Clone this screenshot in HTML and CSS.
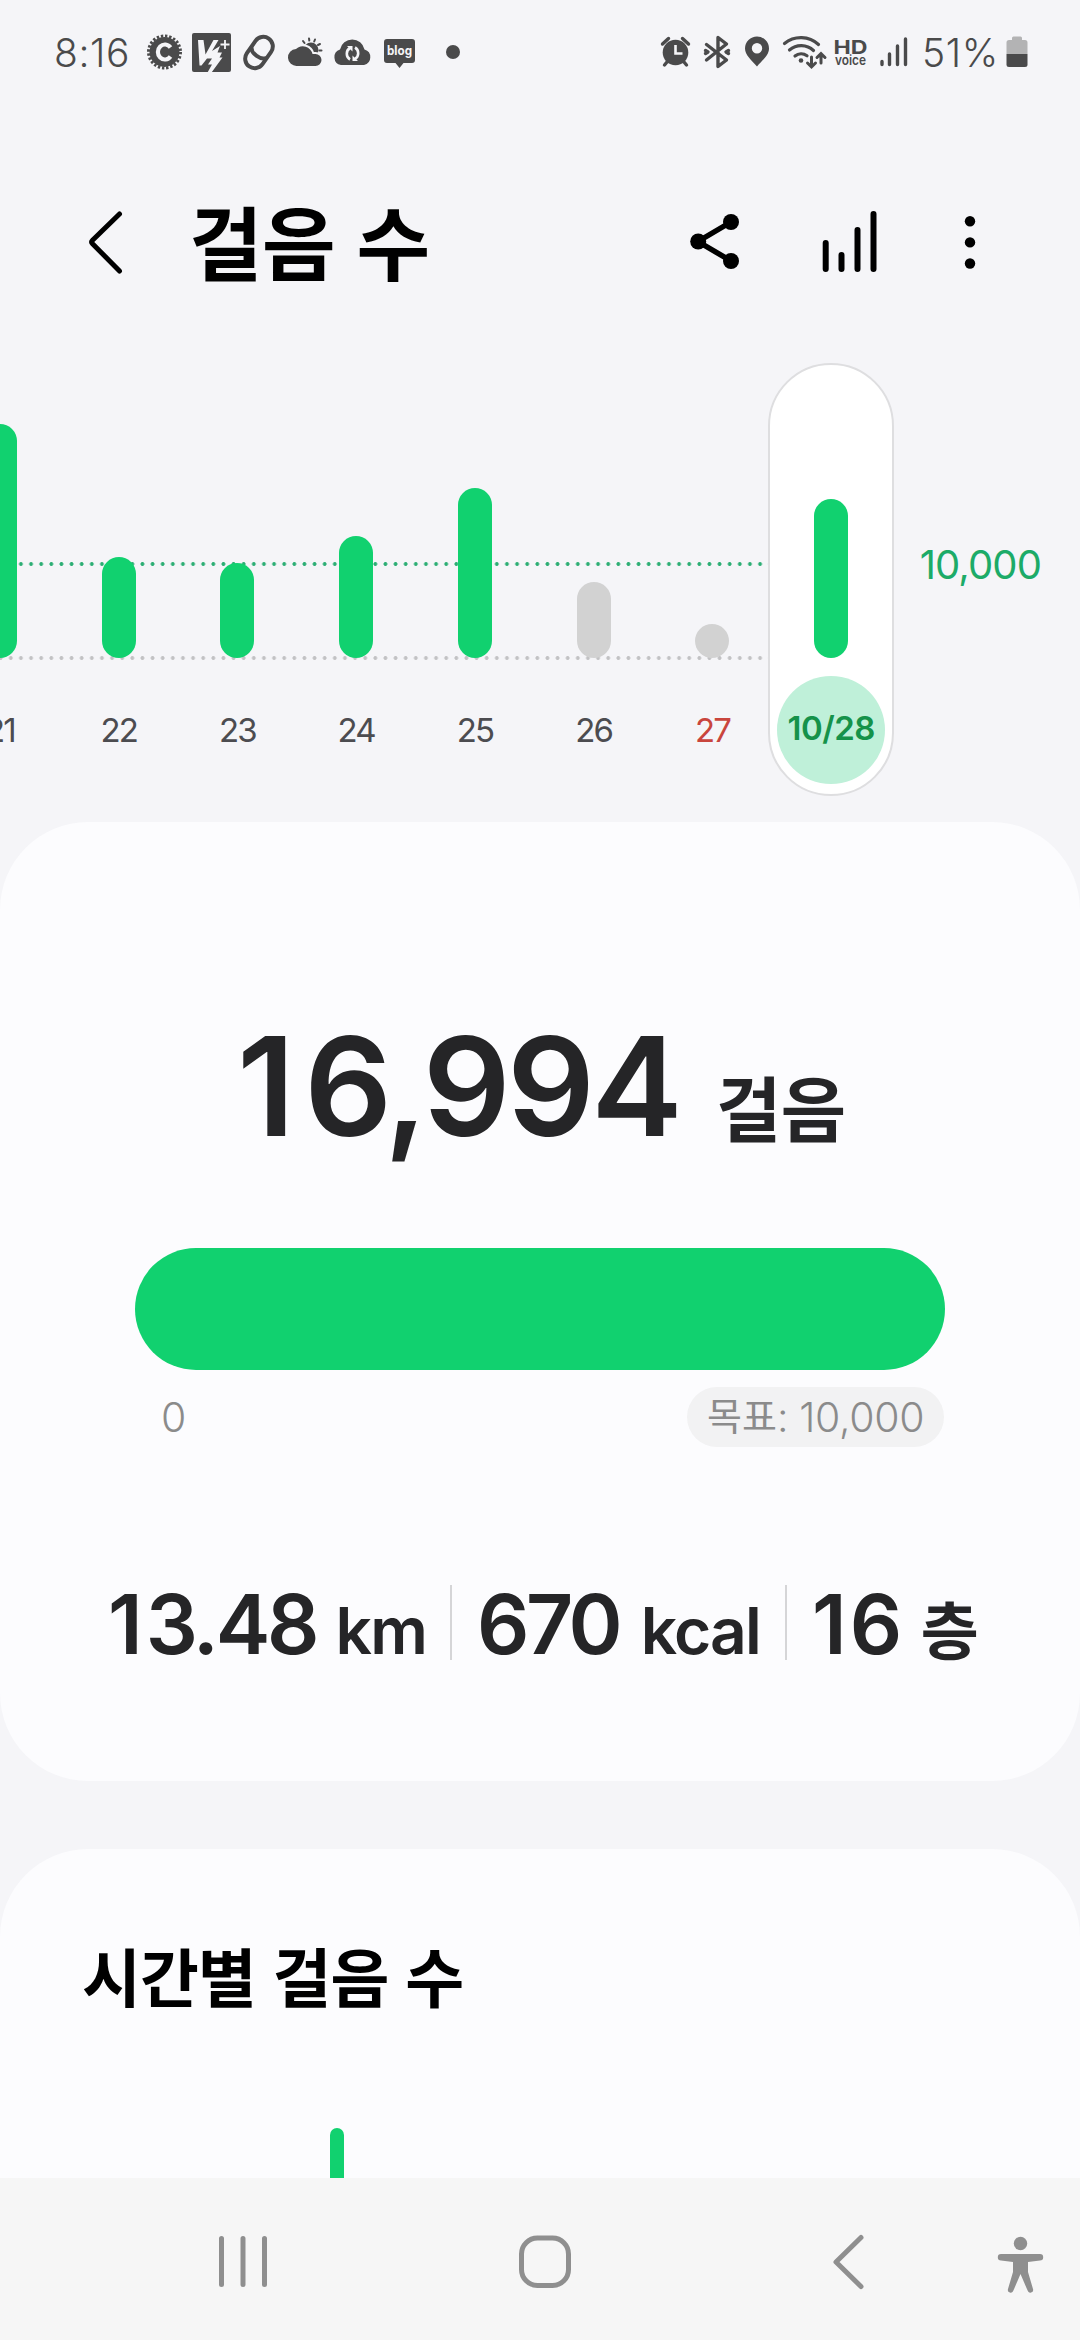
FILE: index.html
```html
<!DOCTYPE html>
<html lang="ko">
<head>
<meta charset="utf-8">
<title>걸음 수</title>
<link rel="stylesheet" href="styles.css">
</head>
<body>
<div class="screen">
  <div class="status">
    <span class="clock">8:16</span>
    <svg class="status-left" width="330" height="50" viewBox="140 27 330 50">
      <circle cx="164.500" cy="52" r="15" fill="#4a4a4b"/>
      <circle cx="164.500" cy="52" r="16" fill="none" stroke="#4a4a4b" stroke-width="3" stroke-dasharray="2.400 1.790"/>
      <path d="M170.500 47.500a7 7.500 0 1 0 0 9" fill="none" stroke="#f5f5f8" stroke-width="4.200"/>
      <rect x="192" y="33" width="39" height="39" rx="2" fill="#4a4a4b"/>
      <path d="M198 40h5.500l2 14.500 8-14.500h5l-6.500 11 8-5-2.500 6.500h4.500l-2.500 5h3l-11 15h-4l4.500-8h-4l4-6h-5l-5.500 7h-2z" fill="#f5f5f8"/>
      <path d="M225 40v9M220.500 44.500h9" stroke="#f5f5f8" stroke-width="1.800"/>
      <g transform="rotate(35 259 52.500)" fill="none" stroke="#4a4a4b" stroke-width="4">
        <rect x="249.500" y="35.500" width="19" height="34" rx="9.500"/>
        <path d="M250 52.500a9.500 6 0 0 0 18 0"/>
      </g>
      <circle cx="311" cy="50" r="7.500" fill="#4a4a4b"/>
      <g stroke="#4a4a4b" stroke-width="2" stroke-linecap="round"><path d="M303 41l1.500 2M309 38.500l.3 2M315 39.500l-.8 2M320 44l-2 1M321.500 50.500h-2M320.500 57l-1.500-1"/></g>
      <path d="M297 66a8.500 8.500 0 0 1-1-17 10 10 0 0 1 16.500 5h3a6 6 0 0 1 0 12z" fill="#4a4a4b" stroke="#f5f5f8" stroke-width="4" paint-order="stroke"/>
      <path d="M341 65a8 8 0 0 1-1-15.500 12.500 12.500 0 0 1 24.500 0A8 8 0 0 1 364 65z" fill="#4a4a4b"/>
      <path d="M350 48a6 6.500 0 0 0 0 11.500M355 47.500a6 6.500 0 0 1 0 11.500" fill="none" stroke="#f5f5f8" stroke-width="2.600"/>
      <path d="M347 46h5.500v5.500zM358 61h-5.500v-5.500z" fill="#f5f5f8"/>
      <path d="M387 39h25a3 3 0 0 1 3 3v18a3 3 0 0 1-3 3h-8.500l-4 5-4-5H387a3 3 0 0 1-3-3V42a3 3 0 0 1 3-3z" fill="#4a4a4b"/>
      <text x="387" y="55" class="blog" textLength="25" lengthAdjust="spacingAndGlyphs">blog</text>
      <circle cx="453" cy="52" r="7" fill="#4a4a4b"/>
    </svg>
    <svg class="status-right" width="260" height="50" viewBox="655 27 260 50">
      <circle cx="675.500" cy="52.500" r="12.800" fill="#4a4a4b"/>
      <path d="M662.500 44l6-5.500M688.500 44l-6-5.500M667 62l-2.500 3M684 62l2.500 3" stroke="#4a4a4b" stroke-width="3.400" stroke-linecap="round"/>
      <path d="M675.500 45v8.500h7" fill="none" stroke="#f5f5f8" stroke-width="2.600"/>
      <path d="M706.500 44.500l20 15.500-8.500 6.500V37.500l8.500 6.500-20 16M705.500 50.500l2.500 1.500-2.500 1.500M728.500 50.500l-2.500 1.500 2.500 1.500" fill="none" stroke="#4a4a4b" stroke-width="3.400" stroke-linejoin="round" stroke-linecap="round"/>
      <path fill-rule="evenodd" d="M757 66.500c-6-7-12-11.500-12-18a12 12 0 0 1 24 0c0 6.500-6 11-12 18zM757 43a5.200 5.200 0 1 0 0 10.400A5.200 5.200 0 0 0 757 43z" fill="#4a4a4b"/>
      <g fill="none" stroke="#4a4a4b" stroke-width="3.200" stroke-linecap="round">
        <path d="M784.500 43.500a26 26 0 0 1 34 1M789.500 50a18 18 0 0 1 24 .5M795 56a10 10 0 0 1 12-.3"/>
        <path d="M811.500 57v9M807.500 63l4 4 4-4M821 63v-9M817 57.500l4-4 4 4" stroke-width="3"/>
      </g>
      <circle cx="801" cy="60.500" r="2.300" fill="#4a4a4b"/>
      <text x="833.500" y="53.500" class="hd" textLength="34" lengthAdjust="spacingAndGlyphs">HD</text>
      <text x="835" y="64.500" class="voice" textLength="31" lengthAdjust="spacingAndGlyphs">voice</text>
      <path d="M882 61.500v3M889.500 54v10.500M897.500 46v18.500M905.500 39v25.500" stroke="#4a4a4b" stroke-width="3.400" stroke-linecap="round"/>
    </svg>
    <span class="percent">51%</span>
    <svg class="battery" width="22" height="32" viewBox="0 0 22 32">
      <path d="M6 3V2q0-1.500 1.500-1.500h7Q16 .500 16 2v2h3q2.500 0 2.500 2.500V18H.500V6.500Q.500 4 3 4h3z" fill="#b3b3b4"/>
      <path d="M.500 18h21v10.500q0 2.500-2.500 2.500H3Q.500 31 .500 28.500z" fill="#4a4a4b"/>
    </svg>
  </div>

  <header class="header">
    <svg class="back" width="36" height="66" viewBox="87 209 36 66"><path d="M119.500 214L92.500 240.300q-1.700 1.700 0 3.400L119.500 271" fill="none" stroke="#000" stroke-width="5" stroke-linecap="round"/></svg>
    <h1 class="title">걸음 수</h1>
    <svg class="actions" width="300" height="70" viewBox="685 207 300 70">
      <path d="M731 222L698 241.500l33 19.500" fill="none" stroke="#000" stroke-width="5.500"/>
      <circle cx="698.200" cy="241.500" r="8"/><circle cx="731" cy="222" r="8"/><circle cx="731" cy="261" r="8"/>
      <path d="M825.700 243v26M841.500 255v14M857.500 230v39M873.500 214v55" stroke="#000" stroke-width="6" stroke-linecap="round"/>
      <circle cx="970" cy="221.300" r="5.200"/><circle cx="970" cy="242.400" r="5.200"/><circle cx="970" cy="263.500" r="5.200"/>
    </svg>
  </header>

  <section class="chart">
    <div class="days">
      <div class="day"><i class="bar" style="height:234px"></i><span class="date">21</span></div>
      <div class="day"><i class="bar" style="height:101px"></i><span class="date">22</span></div>
      <div class="day"><i class="bar" style="height:95px"></i><span class="date">23</span></div>
      <div class="day"><i class="bar" style="height:122px"></i><span class="date">24</span></div>
      <div class="day"><i class="bar" style="height:170px"></i><span class="date">25</span></div>
      <div class="day"><i class="bar missed" style="height:76px"></i><span class="date">26</span></div>
      <div class="day"><i class="bar missed" style="height:34px"></i><span class="date holiday">27</span></div>
      <div class="day selected"><i class="bar" style="height:159px"></i><span class="date">10/28</span></div>
    </div>
    <span class="goal-line-label">10,000</span>
  </section>

  <section class="card summary">
    <div class="count"><span class="count-value"><span class="lead">1</span>6,994</span><span class="count-unit">걸음</span></div>
    <div class="progress"></div>
    <div class="range"><span class="zero">0</span><span class="goal"><span class="goal-name">목표</span><span class="goal-value">: 10,000</span></span></div>
    <div class="stats">
      <div class="stat distance"><b><span class="lead">1</span>3.48</b><span class="unit">km</span></div>
      <div class="stat energy"><b>670</b><span class="unit">kcal</span></div>
      <div class="stat floors"><b><span class="lead">1</span>6</b><span class="unit ko">층</span></div>
    </div>
  </section>

  <section class="card hourly">
    <h2 class="subtitle">시간별 걸음 수</h2>
    <div class="hour-bar"></div>
  </section>

  <nav class="nav">
    <svg width="1080" height="162" viewBox="0 2178 1080 162">
      <g fill="none" stroke="#8f8f8f" stroke-width="5" stroke-linecap="round">
        <path d="M221.500 2238.500v46M243 2238.500v46M264.500 2238.500v46"/>
        <rect x="521.500" y="2238" width="47" height="47.500" rx="16"/>
        <path d="M861 2237.500L836 2262l25 24.500" stroke-linejoin="round"/>
      </g>
      <g fill="#8f8f8f">
        <circle cx="1020.500" cy="2243.500" r="6.700"/>
        <path d="M1001 2254h39a3.200 3.200 0 0 1 0 6.400l-12 1.600v10l5 17a2.800 2.800 0 0 1-5.400 1.600L1020.500 2274l-7.100 16.600a2.800 2.800 0 0 1-5.400-1.600l5-17v-10l-12-1.600a3.200 3.200 0 0 1 0-6.400z"/>
      </g>
    </svg>
  </nav>
</div>
</body>
</html>
```
FILE: styles.css
```css
* { box-sizing: border-box; }
body { margin: 0; background: #f5f5f8; }
.screen {
  width: 1080px; height: 2340px; overflow: hidden;
  display: flex; flex-direction: column;
  background: #f5f5f8; color: #252527;
  font-family: Inter, "Noto Sans CJK KR", sans-serif;
  white-space: nowrap;
}
svg { display: block; flex: none; }
h1, h2 { margin: 0; }

.status { height: 104px; flex: none; display: flex; align-items: center; padding-left: 54px; color: #4a4a4b; }
.clock { width: 86px; font-size: 39px; font-weight: 350; letter-spacing: 0.600px; }
.status-left { margin-right: 185px; }
.percent { width: 90px; margin-left: 7px; font-size: 39px; font-weight: 350; letter-spacing: 0.600px; }
.battery { margin-left: -6px; }
.blog { font: 700 12.500px Inter, sans-serif; fill: #f5f5f8; }
.hd { font: 700 19px Inter, sans-serif; fill: #4a4a4b; }
.voice { font: 600 13.500px Inter, sans-serif; fill: #4a4a4b; }

.header { height: 259px; flex: none; display: flex; align-items: center; padding: 17px 0 0 87px; }
.title { width: 496px; margin: -6px 0 0 66px; font: 700 80px/110px "Noto Sans CJK KR", sans-serif; color: #000; letter-spacing: -0.700px; }

.chart { height: 433px; flex: none; display: flex; }
.days {
  display: flex; flex: none; margin-left: -59.400px;
  background:
    radial-gradient(circle, #2cae74 1.600px, transparent 2.200px) 4px 198px / 10.130px 6px repeat-x,
    radial-gradient(circle, #c2c2c4 1.600px, transparent 2.200px) 4px 292px / 10.130px 6px repeat-x;
}
.day { width: 118.750px; display: flex; flex-direction: column; align-items: center; justify-content: flex-end; padding-bottom: 12px; }
.bar { width: 34px; border-radius: 17px; background: #11d16f; margin-bottom: 18px; }
.missed { background: #d2d2d2; }
.date { width: 108px; height: 108px; line-height: 108px; text-align: center; font-size: 33px; letter-spacing: -1.800px; color: #4c4c50; }
.holiday { color: #c9453d; }
.selected { width: 126px; margin: 0 -3.600px; padding-bottom: 10px; background: #fff; border: 2px solid #dedee0; border-radius: 63px; }
.selected .date { border-radius: 50%; background: #bff0d9; color: #15924a; font-weight: 600; line-height: 105px; letter-spacing: -0.500px; }
.goal-line-label { margin: 177px 0 0 29px; height: 50px; line-height: 50px; font-size: 40px; font-weight: 400; letter-spacing: -0.900px; color: #1cab68; }

.card { flex: none; background: #fcfcfe; }
.summary { margin-top: 26px; height: 959px; border-radius: 88px; padding-top: 194px; }
.count { height: 140px; display: flex; align-items: center; padding-left: 237px; }
.count-value { width: 479px; font-size: 137.500px; font-weight: 600; letter-spacing: -3.700px; }
.count-value .lead { letter-spacing: 9px; }
.count-unit { font: 700 71px/100px "Noto Sans CJK KR", sans-serif; margin-top: 38px; letter-spacing: -0.500px; }
.progress { margin: 92px 135px 0; height: 122px; border-radius: 61px; background: #11d16f; }
.range { margin: 17px 136px 0; height: 60px; display: flex; justify-content: space-between; align-items: center; font-size: 41px; font-weight: 350; color: #8b8b8b; }
.zero { padding-left: 25px; }
.goal { display: flex; align-items: center; width: 257px; height: 60px; border-radius: 30px; background: #f2f2f3; padding-left: 20px; }
.goal-name { font-size: 38px; font-weight: 400; line-height: 50px; margin-top: -2px; }
.goal-value { letter-spacing: -0.350px; }
.stats { margin-top: 138px; height: 75px; display: flex; padding-left: 108px; }
.stat { display: flex; align-items: baseline; line-height: 79px; font-weight: 600; }
.stat b { font-size: 82px; font-weight: 600; letter-spacing: -3.300px; }
.stat .lead { letter-spacing: 3px; }
.unit { font-size: 64px; letter-spacing: -1.800px; }
.unit.ko { font: 700 63px/79px "Noto Sans CJK KR", sans-serif; }
.distance { width: 342px; justify-content: space-between; padding-right: 24px; }
.energy { width: 337px; border: solid #d5d5d7; border-width: 0 2px; justify-content: space-between; padding: 0 25px; }
.energy b { letter-spacing: -3.500px; }
.floors { width: 190px; justify-content: space-between; padding-left: 25px; }

.hourly { margin-top: 68px; height: 329px; border-radius: 88px 88px 0 0; padding: 75px 0 0 82px; }
.subtitle { font: 700 64px/100px "Noto Sans CJK KR", sans-serif; color: #000; letter-spacing: -1px; }
.hour-bar { width: 14px; height: 50px; margin: 104px 0 0 248px; border-radius: 7px 7px 0 0; background: #11d16f; }

.nav { height: 162px; flex: none; background: #f6f6f6; }
```
